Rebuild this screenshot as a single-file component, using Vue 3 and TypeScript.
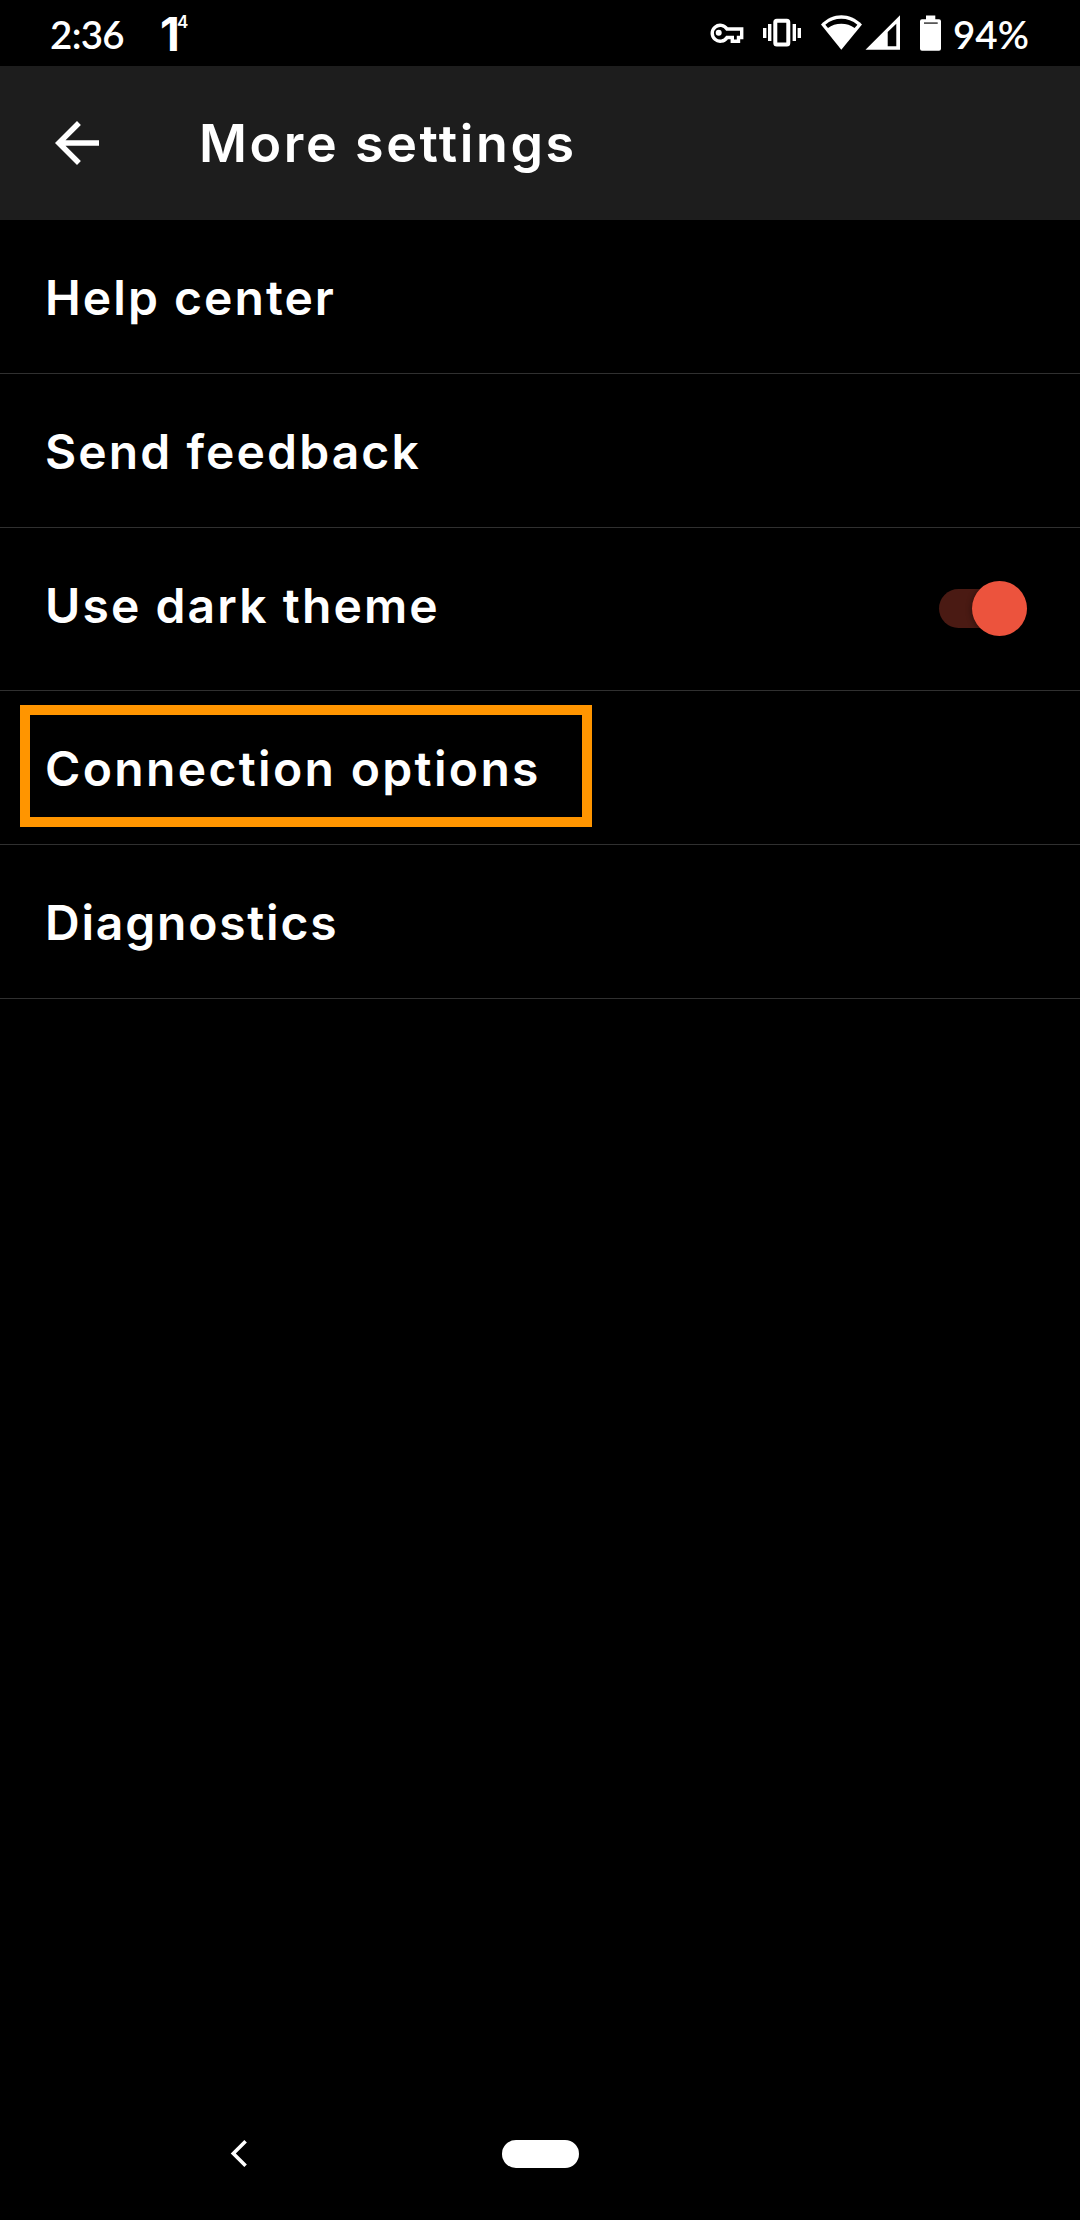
<script setup lang="ts">
import { ref } from 'vue'

interface Item {
  label: string
  spacing: number
  toggle?: boolean
  highlighted?: boolean
}

const darkTheme = ref(true)

const items: Item[] = [
  { label: 'Help center', spacing: 2.05 },
  { label: 'Send feedback', spacing: 2.1 },
  { label: 'Use dark theme', spacing: 2.1, toggle: true },
  { label: 'Connection options', spacing: 2.35, highlighted: true },
  { label: 'Diagnostics', spacing: 1.8 },
]
</script>

<template>
  <div class="screen">
    <div class="status">
      <span class="clock">2:36</span>
      <span class="weather"><span class="deg">1</span><span class="sup">4</span></span>
      <svg class="status-icons" width="250" height="66" viewBox="700 0 250 66">
        <path
          d="M727 29H741.7V37.5H738.5V41.2H732.3V37.5H727A8 8 0 1 1 727 29Z"
          fill="none" stroke="#fff" stroke-width="3.4" stroke-linejoin="miter"
        />
        <circle cx="718.7" cy="32.7" r="3" fill="#fff" />
        <rect x="775.3" y="20.7" width="13" height="23.8" rx="1.5" fill="none" stroke="#fff" stroke-width="4" />
        <path d="M768 24h3.4v17h-3.4zM763 28h3.4v10h-3.4zM792.6 24h3.4v17h-3.4zM797.6 28h3.4v10h-3.4z" fill="#fff" />
        <path d="M841.3 49.7L821 24.5C833 12.3 849.6 12.3 862 24.5Z" fill="#fff" />
        <path d="M825.3 24.7C834.5 16.8 848 16.8 857.4 24.7L854.6 28C847.5 22.3 835 22.3 828 28Z" fill="#000" />
        <path d="M865.5 49.7L900 15.3V49.7ZM887.7 32V46.3H896.3V23.8Z" fill="#fff" fill-rule="evenodd" />
        <path d="M926 15.5h9.3v3.7h3.7a2 2 0 0 1 2 2v27.5a2 2 0 0 1-2 2h-17a2 2 0 0 1-2-2v-27.5a2 2 0 0 1 2-2h4z" fill="#fff" />
        <path d="M924 22.3h13.7v1.6h-13.7z" fill="#444" />
      </svg>
      <span class="battery">94%</span>
    </div>

    <header class="bar">
      <svg class="back" width="66" height="66" viewBox="0 0 24 24">
        <path d="M20 11H7.83l5.59-5.59L12 4l-8 8 8 8 1.41-1.41L7.83 13H20v-2z" fill="#fff" />
      </svg>
      <h1 class="title">More settings</h1>
    </header>

    <main class="list">
      <div v-for="item in items" :key="item.label" class="row" :class="{ tall: item.toggle }">
        <span class="label" :style="{ letterSpacing: item.spacing + 'px' }">{{ item.label }}</span>
        <button
          v-if="item.toggle" class="switch" role="switch" aria-label="Use dark theme"
          :aria-checked="darkTheme" @click="darkTheme = !darkTheme"
        >
          <span class="thumb" />
        </button>
        <span v-if="item.highlighted" class="outline" />
      </div>
    </main>

    <nav class="nav">
      <svg class="nav-back" width="18" height="30" viewBox="0 0 18 30">
        <path d="M15.6 2.2L3.3 14.5L15.6 26.8" fill="none" stroke="#fff" stroke-width="3.6" />
      </svg>
      <span class="pill" />
    </nav>
  </div>
</template>

<style>
body {
  margin: 0;
  background: #000;
}
</style>

<style scoped>
.screen {
  width: 1080px;
  height: 2220px;
  display: flex;
  flex-direction: column;
  overflow: hidden;
  background: #000;
  color: #fff;
  font-family: Inter, "Liberation Sans", sans-serif;
}
.status {
  height: 66px;
  display: flex;
  flex: none;
  line-height: 66px;
}
.clock,
.battery {
  font-family: Lato, sans-serif;
  font-weight: 600;
  font-size: 38.5px;
  white-space: nowrap;
}
.clock {
  width: 110px;
  padding-left: 50px;
  padding-top: 1px;
  letter-spacing: -0.7px;
}
.weather {
  display: flex;
  width: 540px;
}
.deg {
  font-size: 46px;
  font-weight: 700;
  width: 17px;
  padding-top: 1px;
}
.sup {
  font-size: 17px;
  font-weight: 600;
  line-height: 44px;
}
.status-icons {
  flex: none;
}
.battery {
  padding-left: 3px;
  padding-top: 1px;
}
.bar {
  height: 154px;
  flex: none;
  display: flex;
  align-items: center;
  background: #1d1d1d;
}
.back {
  margin-left: 44px;
}
.title {
  margin: 2px 0 0 89px;
  font-size: 52px;
  line-height: 64px;
  font-weight: 600;
  letter-spacing: 2.6px;
  white-space: nowrap;
}
.list {
  flex: 1;
}
.row {
  position: relative;
  box-sizing: border-box;
  height: 154px;
  display: flex;
  justify-content: space-between;
  padding: 48px 53px 0 45px;
  border-bottom: 1px solid #303030;
}
.row.tall {
  height: 163px;
}
.label {
  font-size: 48px;
  line-height: 60px;
  font-weight: 600;
  white-space: nowrap;
}
.switch {
  display: flex;
  align-items: center;
  justify-content: flex-end;
  width: 88px;
  height: 39px;
  margin-top: 13px;
  padding: 0;
  border: 0;
  border-radius: 20px;
  background: #4a1a13;
}
.thumb {
  flex: none;
  width: 55.4px;
  height: 55.4px;
  border-radius: 50%;
  background: #ec533d;
  box-shadow: 0 1px 6px rgba(0, 0, 0, 0.45);
}
.outline {
  position: absolute;
  left: 20px;
  top: 14px;
  box-sizing: border-box;
  width: 572px;
  height: 122px;
  border: 10px solid #ff9500;
}
.nav {
  height: 132px;
  flex: none;
  display: flex;
  align-items: center;
}
.nav-back {
  margin-left: 230px;
}
.pill {
  width: 77px;
  height: 28px;
  margin-left: 254px;
  border-radius: 14px;
  background: #fff;
}
</style>
